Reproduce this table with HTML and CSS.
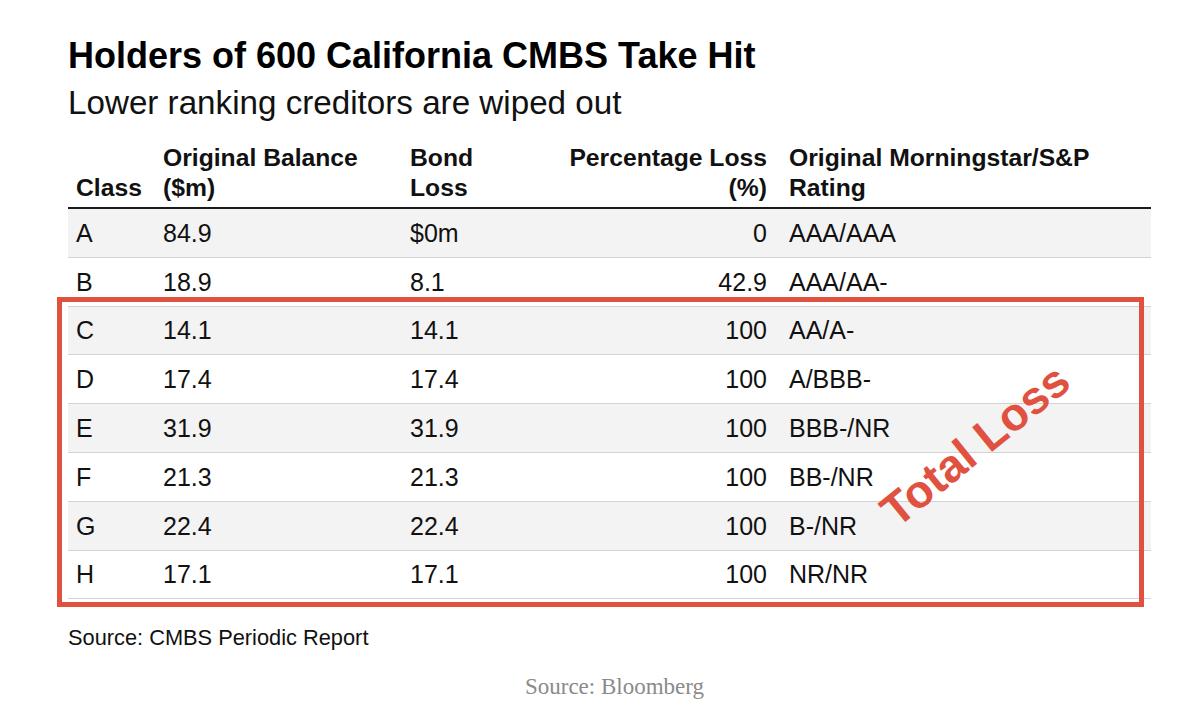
FILE: index.html
```html
<!DOCTYPE html>
<html lang="en">
<head>
<meta charset="utf-8">
<title>Holders of 600 California CMBS Take Hit</title>
<link rel="stylesheet" href="styles.css">
</head>
<body>
<div class="page">
  <h1 class="title">Holders of 600 California CMBS Take Hit</h1>
  <p class="subtitle">Lower ranking creditors are wiped out</p>
  <table class="data">
    <colgroup>
      <col class="w-class">
      <col class="w-balance">
      <col class="w-bond">
      <col class="w-pct">
      <col class="w-rating">
    </colgroup>
    <thead>
      <tr>
        <th>Class</th>
        <th>Original Balance<br>($m)</th>
        <th>Bond<br>Loss</th>
        <th class="num">Percentage Loss<br>(%)</th>
        <th class="rating">Original Morningstar/S&amp;P<br>Rating</th>
      </tr>
    </thead>
    <tbody>
      <tr><td>A</td><td>84.9</td><td>$0m</td><td class="num">0</td><td class="rating">AAA/AAA</td></tr>
      <tr><td>B</td><td>18.9</td><td>8.1</td><td class="num">42.9</td><td class="rating">AAA/AA-</td></tr>
      <tr><td>C</td><td>14.1</td><td>14.1</td><td class="num">100</td><td class="rating">AA/A-</td></tr>
      <tr><td>D</td><td>17.4</td><td>17.4</td><td class="num">100</td><td class="rating">A/BBB-</td></tr>
      <tr><td>E</td><td>31.9</td><td>31.9</td><td class="num">100</td><td class="rating">BBB-/NR</td></tr>
      <tr><td>F</td><td>21.3</td><td>21.3</td><td class="num">100</td><td class="rating">BB-/NR</td></tr>
      <tr><td>G</td><td>22.4</td><td>22.4</td><td class="num">100</td><td class="rating">B-/NR</td></tr>
      <tr><td>H</td><td>17.1</td><td>17.1</td><td class="num">100</td><td class="rating">NR/NR</td></tr>
    </tbody>
  </table>
  <p class="source">Source: CMBS Periodic Report</p>
  <p class="credit">Source: Bloomberg</p>
  <div class="highlight"></div>
  <div class="stamp">Total Loss</div>
</div>
</body>
</html>
```

FILE: styles.css
```css
html, body {
  margin: 0;
  padding: 0;
  background: #ffffff;
}

.page {
  position: relative;
  width: 1083px;
  padding: 34px 0 0 68px;
  font-family: "Liberation Sans", Arial, Helvetica, sans-serif;
  color: #111111;
}

.title {
  margin: 0;
  font-size: 36px;
  line-height: 44px;
  font-weight: 700;
  color: #000000;
}

.subtitle {
  margin: 5px 0 0;
  font-size: 33.2px;
  line-height: 40px;
  font-weight: 400;
  color: #111111;
}

.data {
  margin-top: 14px;
  width: 1083px;
  table-layout: fixed;
  border-collapse: collapse;
  border-spacing: 0;
}

.w-class { width: 87px; }
.w-balance { width: 247px; }
.w-bond { width: 158px; }
.w-pct { width: 215px; }
.w-rating { width: 376px; }

.data th {
  text-align: left;
  vertical-align: bottom;
  font-size: 24.7px;
  line-height: 30px;
  font-weight: 700;
  padding: 6px 8px 4px;
  border-bottom: 2px solid #1a1a1a;
  white-space: nowrap;
}

.data td {
  height: 47.8px;
  padding: 0 8px;
  font-size: 25px;
  line-height: 30px;
  vertical-align: middle;
  border-bottom: 1.5px solid #d3d3d3;
  white-space: nowrap;
}

.data tbody tr:nth-child(odd) td {
  background: #f3f3f3;
}

.data .num {
  text-align: right;
}

.data .rating {
  padding-left: 14px;
}

.source {
  margin: 26px 0 0;
  font-size: 21.8px;
  line-height: 26px;
  color: #111111;
}

.credit {
  margin: 23px 0 0;
  text-align: center;
  font-family: "Liberation Serif", "Times New Roman", serif;
  font-size: 23px;
  line-height: 26px;
  color: #8a8a8a;
  padding-left: 10px;
}

.highlight {
  position: absolute;
  left: 57px;
  top: 297px;
  width: 1077px;
  height: 300px;
  border: 5px solid #e0513f;
}

.stamp {
  position: absolute;
  left: 975px;
  top: 445px;
  transform: translate(-50%, -50%) rotate(-39deg);
  font-size: 46px;
  line-height: 1;
  font-weight: 700;
  color: #e0513f;
  white-space: nowrap;
}
```
